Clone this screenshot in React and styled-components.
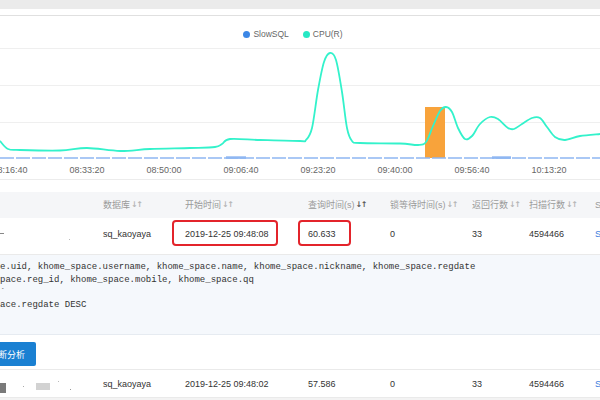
import styled, { createGlobalStyle } from "styled-components";

const GlobalStyle = createGlobalStyle`
  html, body { margin: 0; padding: 0; background: #fff; }
  body {
    width: 600px;
    height: 400px;
    overflow: hidden;
    font-family: "Liberation Sans", "Noto Sans CJK SC", sans-serif;
    color: #333;
  }
`;

// CPU(R) series, page coordinates
const cpu = [
  [0, 141], [8, 149], [20, 150], [60, 150.5], [87, 148], [120, 151], [150, 149],
  [190, 148], [215, 147], [222, 144], [230, 139], [260, 140], [300, 141],
  [306, 140], [312, 128], [318, 90], [324, 62], [330, 53], [336, 60], [342, 92],
  [347, 128], [352, 141], [360, 143], [400, 143.5], [418, 145], [426, 142],
  [433, 126], [440, 111], [446, 107], [452, 112], [458, 128], [465, 139],
  [472, 136], [480, 124], [490, 117], [498, 119], [508, 128], [514, 129],
  [522, 124], [532, 118], [540, 118], [547, 127], [555, 137], [565, 140],
  [580, 136], [600, 134],
];

function smooth(pts) {
  let d = `M${pts[0][0]},${pts[0][1]}`;
  for (let i = 0; i < pts.length - 1; i++) {
    const p0 = pts[i - 1] || pts[i];
    const p1 = pts[i];
    const p2 = pts[i + 1];
    const p3 = pts[i + 2] || p2;
    const c1 = [p1[0] + (p2[0] - p0[0]) / 6, p1[1] + (p2[1] - p0[1]) / 6];
    const c2 = [p2[0] - (p3[0] - p1[0]) / 6, p2[1] - (p3[1] - p1[1]) / 6];
    d += ` C${c1[0]},${c1[1]} ${c2[0]},${c2[1]} ${p2[0]},${p2[1]}`;
  }
  return d;
}

const ticks = [
  [10, "08:16:40"], [87, "08:33:20"], [164, "08:50:00"], [241, "09:06:40"],
  [318, "09:23:20"], [395, "09:40:00"], [472, "09:56:40"], [549, "10:13:20"],
];

const columns = [
  { key: "db", title: "数据库" },
  { key: "start", title: "开始时间" },
  { key: "query", title: "查询时间(s)", active: true },
  { key: "lock", title: "锁等待时间(s)" },
  { key: "ret", title: "返回行数" },
  { key: "scan", title: "扫描行数" },
];

export default function App() {
  return (
    <Page>
      <GlobalStyle />
      <TopBand />
      <ChartPanel>
        <Legend>
          <LegendItem $color="#3c87e6">SlowSQL</LegendItem>
          <LegendItem $color="#26e8c4">CPU(R)</LegendItem>
        </Legend>
        <Plot viewBox="0 46 600 133" width="600" height="133">
          {[48.5, 85.5, 122.5].map((y) => (
            <line key={y} x1="0" x2="600" y1={y} y2={y} stroke="#efefef" strokeWidth="1" />
          ))}
          <rect x="425" y="107" width="20" height="51" fill="#f8a33b" />
          <line x1="0" x2="600" y1="158" y2="158" stroke="#8fb7f2" strokeWidth="1.4" strokeDasharray="14 2" />
          <rect x="226" y="156.3" width="20" height="2.6" fill="#8fb7f2" />
          <rect x="492" y="156.3" width="19" height="2.6" fill="#8fb7f2" />
          <path d={smooth(cpu)} fill="none" stroke="#33f2cb" strokeWidth="1.8" />
          {ticks.map(([x, t]) => (
            <text key={t} x={x} y="173" textAnchor="middle" fontSize="9" fill="#666"
              fontFamily='"Liberation Sans", sans-serif'>{t}</text>
          ))}
        </Plot>
      </ChartPanel>

      <HeadRow>
        <Cell />
        {columns.map((c) => (
          <HeadCell key={c.key}>
            {c.title}
            <Sort $active={c.active}>↓↑</Sort>
          </HeadCell>
        ))}
        <HeadCell>S</HeadCell>
      </HeadRow>

      <Row $h={32} $pb={4}>
        <Cell>
          <Redacted>
            <Blot $w={4} $h={1} $c="#888" />
            <Blot $w={1} $h={1} $c="#bbb" $ml={65} $mt={10} />
          </Redacted>
        </Cell>
        <Cell>sq_kaoyaya</Cell>
        <Cell><Marked $l={13} $r={9}>2019-12-25 09:48:08</Marked></Cell>
        <Cell><Marked $l={10} $r={15}>60.633</Marked></Cell>
        <Cell>0</Cell>
        <Cell>33</Cell>
        <Cell>4594466</Cell>
        <Cell><Link>S</Link></Cell>
      </Row>

      <Detail>
        <CodeLine>e.uid, khome_space.username, khome_space.name, khome_space.nickname, khome_space.regdate</CodeLine>
        <CodeLine>pace.reg_id, khome_space.mobile, khome_space.qq</CodeLine>
        <CodeLine>`</CodeLine>
        <CodeLine>ace.regdate DESC</CodeLine>
      </Detail>

      <Actions>
        <Button>诊断分析</Button>
      </Actions>

      <Row $h={27} $pb={0}>
        <Cell>
          <Redacted>
            <Blot $w={6} $h={10} $c="#7a7a7a" />
            <Blot $w={1} $h={1} $c="#aaa" $ml={17} $mt={7} />
            <Blot $w={14} $h={7} $c="#d2d2d2" $ml={12} />
            <Blot $w={1} $h={1} $c="#bbb" $ml={8} $mt={2} />
            <Blot $w={1} $h={1} $c="#999" $ml={11} $mt={10} />
          </Redacted>
        </Cell>
        <Cell>sq_kaoyaya</Cell>
        <Cell>2019-12-25 09:48:02</Cell>
        <Cell>57.586</Cell>
        <Cell>0</Cell>
        <Cell>33</Cell>
        <Cell>4594466</Cell>
        <Cell><Link>S</Link></Cell>
      </Row>
      <Footer />
    </Page>
  );
}

const Page = styled.div`
  width: 600px;
  height: 400px;
  overflow: hidden;
  display: flex;
  flex-direction: column;
  background: #fff;
`;

const TopBand = styled.div`
  height: 9px;
  background: #ebebeb;
  margin-bottom: 6px;
  flex-shrink: 0;
`;

const ChartPanel = styled.section`
  border-top: 1.5px solid #e0e0e0;
  border-bottom: 1px solid #ececec;
  display: flex;
  flex-direction: column;
  flex-shrink: 0;
`;

const Legend = styled.div`
  height: 30px;
  padding-top: 6px;
  box-sizing: border-box;
  display: flex;
  align-items: center;
  justify-content: center;
  gap: 14px;
  padding-right: 14px;
`;

const LegendItem = styled.span`
  display: flex;
  align-items: center;
  gap: 3px;
  font-size: 8.5px;
  color: #666;
  &::before {
    content: "";
    width: 7px;
    height: 7px;
    border-radius: 50%;
    background: ${(p) => p.$color};
  }
`;

const Plot = styled.svg`
  display: block;
`;

const grid = `
  display: grid;
  grid-template-columns: 103px 82px 123px 82px 82px 57px 66px 1fr;
  align-items: center;
  flex-shrink: 0;
  white-space: nowrap;
  font-size: 9px;
  line-height: 12px;
`;

const HeadRow = styled.div`
  ${grid}
  margin-top: 12px;
  height: 26px;
  background: #f5f6f8;
  color: #9a9a9a;
`;

const HeadCell = styled.div`
  display: flex;
  align-items: center;
  overflow: hidden;
`;

const Sort = styled.span`
  margin-left: 1px;
  font-family: "DejaVu Sans", sans-serif;
  font-size: 8px;
  font-weight: 700;
  letter-spacing: -1.5px;
  color: ${(p) => (p.$active ? "#555" : "#b5b5b5")};
`;

const Row = styled.div`
  ${grid}
  height: ${(p) => p.$h}px;
  padding-bottom: ${(p) => p.$pb}px;
  box-sizing: content-box;
  border-bottom: 1px solid #eaeaea;
  color: #333;
`;

const Cell = styled.div`
  overflow: visible;
`;

const Marked = styled.span`
  position: relative;
  display: inline-block;
  &::after {
    content: "";
    position: absolute;
    top: -8px;
    bottom: -6px;
    left: -${(p) => p.$l}px;
    right: -${(p) => p.$r}px;
    border: 2px solid #e3242b;
    border-radius: 4px;
  }
`;

const Link = styled.span`
  color: #3b7ddd;
`;

const Redacted = styled.div`
  display: flex;
  align-items: flex-start;
  height: 10px;
`;

const Blot = styled.span`
  width: ${(p) => p.$w}px;
  height: ${(p) => p.$h}px;
  background: ${(p) => p.$c};
  margin-left: ${(p) => p.$ml || 0}px;
  margin-top: ${(p) => p.$mt || 4}px;
`;

const Detail = styled.div`
  height: 80px;
  padding-top: 6px;
  box-sizing: border-box;
  background: #f5f8fc;
  border-bottom: 1px solid #e6ebf1;
  flex-shrink: 0;
`;

const CodeLine = styled.div`
  font-family: "Liberation Mono", monospace;
  font-size: 9px;
  line-height: 12.7px;
  height: 12.7px;
  white-space: pre;
  color: #333;
`;

const Actions = styled.div`
  height: 35px;
  padding-top: 7px;
  box-sizing: border-box;
  border-bottom: 1px solid #eaeaea;
  flex-shrink: 0;
`;

const Button = styled.button`
  height: 24px;
  margin-left: -22px;
  padding: 0 11px;
  border: none;
  border-radius: 2px;
  background: #1a80d2;
  color: #fff;
  font-family: "Liberation Sans", "Noto Sans CJK SC", sans-serif;
  font-size: 9px;
  white-space: nowrap;
`;

const Footer = styled.div`
  flex: 1;
  background: #f3f3f3;
`;
